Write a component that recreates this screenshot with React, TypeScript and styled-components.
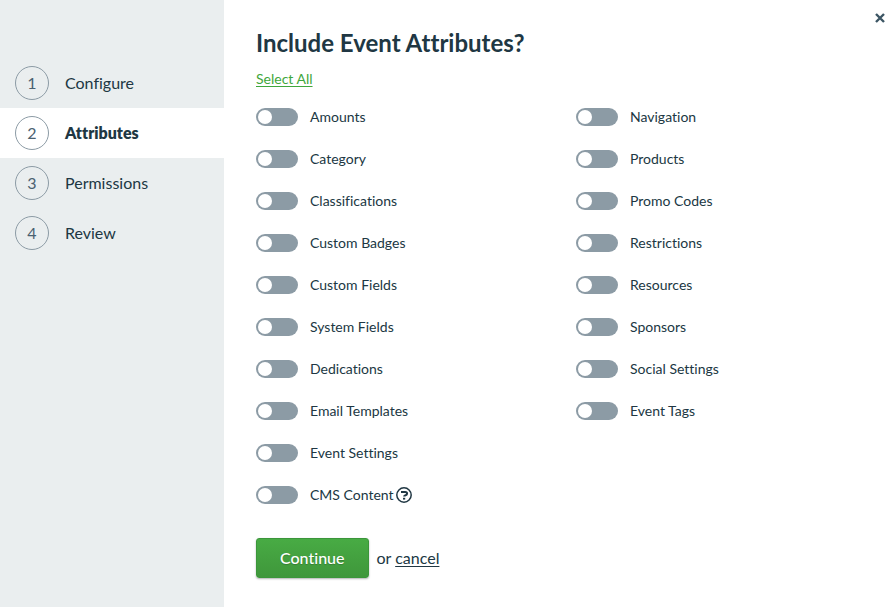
import React, { useState } from "react";
import styled, { createGlobalStyle } from "styled-components";

const color = {
  ink: "#203743",
  slate: "#4a6171",
  outline: "#8c9ba5",
  rail: "#eaeeef",
  green: "#3fa73c",
};

const GlobalStyle = createGlobalStyle`
  *, *::before, *::after { box-sizing: border-box; }
  body {
    margin: 0;
    background: #fff;
    color: ${color.ink};
    font-family: Lato, "Liberation Sans", sans-serif;
    font-size: 14px;
    font-variant-ligatures: none;
    line-height: 18px;
  }
  button, input { font: inherit; font-variant-ligatures: none; }
`;

const Page = styled.div`
  display: grid;
  grid-template-columns: 25% 1fr;
  min-height: 100vh;
`;

const Sidebar = styled.nav`
  padding-top: 58px;
  background: ${color.rail};
`;

const StepList = styled.ol`
  margin: 0;
  padding: 0;
  list-style: none;
`;

const StepLink = styled.a<{ $current: boolean }>`
  display: flex;
  align-items: center;
  gap: 16px;
  height: 50px;
  padding: 0 15px;
  background: ${(p) => (p.$current ? "#fff" : "transparent")};
  color: ${color.ink};
  font-size: 16px;
  font-weight: ${(p) => (p.$current ? 800 : 400)};
  text-decoration: none;
`;

const StepNumber = styled.span`
  display: flex;
  align-items: center;
  justify-content: center;
  width: 34px;
  height: 34px;
  border: 1px solid ${color.outline};
  border-radius: 50%;
  color: ${color.slate};
  font-weight: 400;
`;

const Main = styled.main`
  position: relative;
  padding: 28px 32px;
`;

const CloseButton = styled.button`
  position: absolute;
  top: 8px;
  right: 6px;
  display: flex;
  align-items: center;
  justify-content: center;
  width: 20px;
  height: 20px;
  padding: 0;
  border: 0;
  background: none;
  color: #3c5564;
  cursor: pointer;
`;

const Title = styled.h1`
  margin: 0 0 12px;
  font-size: 24px;
  font-weight: 700;
  line-height: 30px;
`;

const SelectAll = styled.button`
  display: block;
  margin: 0 0 20px;
  padding: 0;
  border: 0;
  background: none;
  color: ${color.green};
  text-decoration: underline;
  text-underline-offset: 2px;
  cursor: pointer;
`;

const Columns = styled.div`
  display: grid;
  grid-template-columns: 1fr 1fr;
  align-items: start;
  gap: 32px;
`;

const Column = styled.div`
  display: grid;
  gap: 24px;
`;

const Option = styled.div`
  display: flex;
  align-items: center;
  height: 18px;
`;

const OptionLabel = styled.label`
  display: flex;
  align-items: center;
  gap: 12px;
  cursor: pointer;
`;

const Switch = styled.input`
  appearance: none;
  display: flex;
  width: 42px;
  height: 18px;
  margin: 0;
  padding: 2px;
  border-radius: 9px;
  background: ${color.outline};
  cursor: pointer;

  &::before {
    content: "";
    width: 14px;
    height: 14px;
    border-radius: 50%;
    background: #fff;
  }

  &:checked {
    justify-content: flex-end;
    background: ${color.green};
  }
`;

const HelpButton = styled.button`
  display: flex;
  margin: 0 0 0 2px;
  padding: 0;
  border: 0;
  background: none;
  color: ${color.ink};
  cursor: help;
`;

const Actions = styled.div`
  display: flex;
  align-items: center;
  gap: 8px;
  margin-top: 34px;
  font-size: 16px;
`;

const ContinueButton = styled.button`
  height: 40px;
  padding: 0 23px;
  border: 1px solid #3b963a;
  border-radius: 3px;
  background: linear-gradient(#48ab44, #3f973b);
  box-shadow: 0 1px 2px rgba(0, 0, 0, 0.3);
  color: #fff;
  font-weight: 500;
  text-shadow: 0 1px 1px rgba(0, 0, 0, 0.2);
  cursor: pointer;
`;

const CancelLink = styled.a`
  color: ${color.ink};
  text-underline-offset: 2px;
`;

const steps = ["Configure", "Attributes", "Permissions", "Review"];

const columns = [
  [
    "Amounts",
    "Category",
    "Classifications",
    "Custom Badges",
    "Custom Fields",
    "System Fields",
    "Dedications",
    "Email Templates",
    "Event Settings",
    "CMS Content",
  ],
  [
    "Navigation",
    "Products",
    "Promo Codes",
    "Restrictions",
    "Resources",
    "Sponsors",
    "Social Settings",
    "Event Tags",
  ],
];

const CloseIcon = () => (
  <svg width="12" height="12" viewBox="0 0 12 12" aria-hidden="true">
    <path d="M2 2l8 8M10 2l-8 8" fill="none" stroke="currentColor" strokeWidth="2.4" />
  </svg>
);

const HelpIcon = () => (
  <svg width="16" height="16" viewBox="0 0 16 16" fill="none" stroke="currentColor" aria-hidden="true">
    <circle cx="8" cy="8" r="7.2" strokeWidth="1.5" />
    <path d="M5 5h4.2c1.2 0 1.9.6 1.9 1.5 0 1-.8 1.5-1.6 1.8-.9.3-1.4.6-1.4 1.3" strokeWidth="2" />
    <path d="M7 11.7h2.2" strokeWidth="1.8" />
  </svg>
);

export default function App() {
  const [selected, setSelected] = useState<string[]>([]);

  const toggle = (name: string) =>
    setSelected((now) => (now.includes(name) ? now.filter((n) => n !== name) : [...now, name]));

  return (
    <>
      <GlobalStyle />
      <Page>
        <Sidebar aria-label="Steps">
          <StepList>
            {steps.map((step, i) => (
              <li key={step}>
                <StepLink href="#" $current={i === 1} aria-current={i === 1 ? "step" : undefined}>
                  <StepNumber>{i + 1}</StepNumber>
                  {step}
                </StepLink>
              </li>
            ))}
          </StepList>
        </Sidebar>
        <Main>
          <CloseButton type="button" aria-label="Close">
            <CloseIcon />
          </CloseButton>
          <Title>Include Event Attributes?</Title>
          <SelectAll type="button" onClick={() => setSelected(columns.flat())}>
            Select All
          </SelectAll>
          <Columns>
            {columns.map((names) => (
              <Column key={names[0]}>
                {names.map((name) => (
                  <Option key={name}>
                    <OptionLabel>
                      <Switch
                        type="checkbox"
                        role="switch"
                        checked={selected.includes(name)}
                        onChange={() => toggle(name)}
                      />
                      {name}
                    </OptionLabel>
                    {name === "CMS Content" && (
                      <HelpButton type="button" aria-label="About CMS Content">
                        <HelpIcon />
                      </HelpButton>
                    )}
                  </Option>
                ))}
              </Column>
            ))}
          </Columns>
          <Actions>
            <ContinueButton type="button">Continue</ContinueButton>
            <span>
              or <CancelLink href="#">cancel</CancelLink>
            </span>
          </Actions>
        </Main>
      </Page>
    </>
  );
}
